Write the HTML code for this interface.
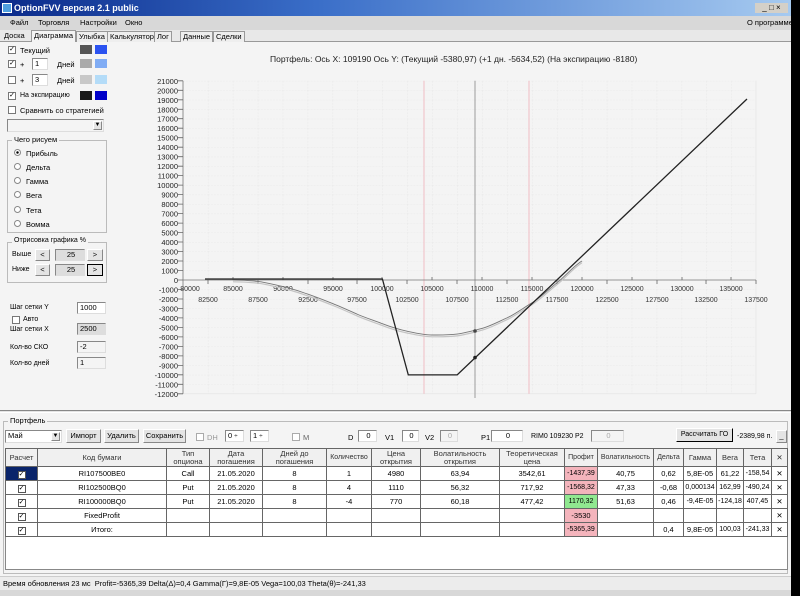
<!DOCTYPE html>
<html><head><meta charset="utf-8">
<style>
*{box-sizing:border-box;margin:0;padding:0}
body{width:800px;height:596px;background:#000;font-family:"Liberation Sans","DejaVu Sans",sans-serif;font-size:8px;color:#000;position:relative;overflow:hidden}
.a{position:absolute}
#win{left:0;top:0;width:791px;height:596px;background:#f4f4f4}
#title{left:0;top:0;width:791px;height:16px;background:linear-gradient(90deg,#0a2a8a,#3a6ec8 40%,#a6caf0);color:#fff;font-weight:bold;font-size:9px;line-height:16px;padding-left:14px}
#menu{left:0;top:16px;width:791px;height:14px;background:#d8d8d8;line-height:14px}
#tabs{left:0;top:30px;width:791px;height:12px;background:#e8e8e8;border-bottom:1px solid #999}
.tab{position:absolute;top:1px;height:11px;line-height:10px;border:1px solid #999;border-bottom:none;padding:0 2px;font-size:7.5px;background:#eee;white-space:nowrap}
.cb{position:absolute;width:8px;height:8px;border:1px solid #777;background:#fff;font-size:7px;line-height:6px;text-align:center}
.sw{position:absolute;width:12px;height:9px}
.inp{position:absolute;background:#fff;border:1px solid #888;border-right-color:#ddd;border-bottom-color:#ddd;font-size:7.5px;line-height:10px;padding-left:2px;white-space:nowrap}
.btn{position:absolute;background:#e4e4e4;border:1px solid #888;border-top-color:#fff;border-left-color:#fff;font-size:7.5px;text-align:center;white-space:nowrap;overflow:hidden}
.grp{position:absolute;border:1px solid #bbb}
.gl{position:absolute;background:#f4f4f4;padding:0 2px;font-size:7.5px;white-space:nowrap}
.rd{position:absolute;width:7px;height:7px;border-radius:50%;border:1px solid #888;background:#fff}
.t{position:absolute;font-size:7.5px;white-space:nowrap}
table{border-collapse:collapse;table-layout:fixed;position:absolute;left:5px;top:448px;background:#fff}
td{border:1px solid #666;font-size:7.5px;text-align:center;height:14px;padding:0;overflow:hidden;white-space:nowrap}
tr.h td{background:#f0f0f0;height:18px;line-height:8px;color:#333}
.ck{display:inline-block;width:8px;height:8px;border:1px solid #555;background:#fff;font-size:7px;line-height:6px}
.pk{background:#f4b4bc}.gr{background:#90e890}
</style></head><body>
<div id="win" class="a">
<div id="title" class="a">OptionFVV версия 2.1 public</div>
<div class="a" style="left:2px;top:3px;width:10px;height:10px;background:#4fa0e0;border:1px solid #fff"></div>
<div class="a" style="left:755px;top:3px;width:33px;height:10px;background:#d4d0c8;font-size:8px;line-height:9px;color:#000;text-align:center">_ □ ×</div>
<div id="menu" class="a"><span class="t" style="left:10px">Файл</span><span class="t" style="left:38px">Торговля</span><span class="t" style="left:80px">Настройки</span><span class="t" style="left:125px">Окно</span><span class="t" style="left:747px">О программе</span></div>
<div id="tabs" class="a">
<span class="tab" style="left:2px;border:none;background:none">Доска</span>
<span class="tab" style="left:31px;background:#f4f4f4;top:0;height:12px">Диаграмма</span>
<span class="tab" style="left:76px">Улыбка</span>
<span class="tab" style="left:107px">Калькулятор</span>
<span class="tab" style="left:154px">Лог</span>
<span class="tab" style="left:180px">Данные</span>
<span class="tab" style="left:213px">Сделки</span>
</div>

<div class="cb" style="left:8px;top:46px">✓</div><span class="t" style="left:20px;top:46px">Текущий</span>
<div class="sw" style="left:80px;top:45px;background:#555"></div><div class="sw" style="left:95px;top:45px;background:#2a52f0"></div>
<div class="cb" style="left:8px;top:60px">✓</div><span class="t" style="left:20px;top:60px">+</span>
<div class="inp" style="left:32px;top:58px;width:16px;height:12px">1</div><span class="t" style="left:57px;top:60px">Дней</span>
<div class="sw" style="left:80px;top:59px;background:#aaa"></div><div class="sw" style="left:95px;top:59px;background:#80acf4"></div>
<div class="cb" style="left:8px;top:76px"></div><span class="t" style="left:20px;top:76px">+</span>
<div class="inp" style="left:32px;top:74px;width:16px;height:12px">3</div><span class="t" style="left:57px;top:76px">Дней</span>
<div class="sw" style="left:80px;top:75px;background:#c8c8c8"></div><div class="sw" style="left:95px;top:75px;background:#b4dcf8"></div>
<div class="cb" style="left:8px;top:92px">✓</div><span class="t" style="left:20px;top:92px;font-size:7px">На экспирацию</span>
<div class="sw" style="left:80px;top:91px;background:#1a1a1a"></div><div class="sw" style="left:95px;top:91px;background:#0000c8"></div>
<div class="cb" style="left:8px;top:106px"></div><span class="t" style="left:20px;top:106px">Сравнить со стратегией</span>
<div class="inp" style="left:7px;top:119px;width:97px;height:13px;background:#f4f4f4"></div>
<div class="btn" style="left:93px;top:121px;width:9px;height:9px;font-size:6px;line-height:7px">▼</div>

<div class="grp" style="left:7px;top:140px;width:100px;height:93px"></div><span class="gl" style="left:12px;top:135px">Чего рисуем</span>
<div class="rd" style="left:14px;top:149px;background:radial-gradient(#000 30%,#fff 40%)"></div><span class="t" style="left:26px;top:149px">Прибыль</span>
<div class="rd" style="left:14px;top:163px"></div><span class="t" style="left:26px;top:163px">Дельта</span>
<div class="rd" style="left:14px;top:177px"></div><span class="t" style="left:26px;top:177px">Гамма</span>
<div class="rd" style="left:14px;top:191px"></div><span class="t" style="left:26px;top:191px">Вега</span>
<div class="rd" style="left:14px;top:206px"></div><span class="t" style="left:26px;top:206px">Тета</span>
<div class="rd" style="left:14px;top:220px"></div><span class="t" style="left:26px;top:220px">Вомма</span>

<div class="grp" style="left:7px;top:242px;width:100px;height:41px"></div><span class="gl" style="left:12px;top:237px;font-size:7px">Отрисовка графика %</span>
<span class="t" style="left:12px;top:251px;font-size:7px">Выше</span><div class="btn" style="left:35px;top:249px;width:15px;height:12px">&lt;</div>
<div class="inp" style="left:55px;top:249px;width:30px;height:12px;background:#ddd;text-align:center">25</div><div class="btn" style="left:87px;top:249px;width:16px;height:12px">&gt;</div>
<span class="t" style="left:12px;top:266px;font-size:7px">Ниже</span><div class="btn" style="left:35px;top:264px;width:15px;height:12px">&lt;</div>
<div class="inp" style="left:55px;top:264px;width:30px;height:12px;background:#ddd;text-align:center">25</div><div class="btn" style="left:87px;top:264px;width:16px;height:12px;border-color:#000">&gt;</div>

<span class="t" style="left:10px;top:304px;font-size:7px">Шаг сетки Y</span><div class="inp" style="left:77px;top:302px;width:29px;height:12px">1000</div>
<div class="cb" style="left:12px;top:316px"></div><span class="t" style="left:23px;top:316px;font-size:7px">Авто</span>
<span class="t" style="left:10px;top:326px;font-size:7px">Шаг сетки X</span><div class="inp" style="left:77px;top:323px;width:29px;height:12px;background:#ddd">2500</div>
<span class="t" style="left:10px;top:344px;font-size:7px">Кол-во СКО</span><div class="inp" style="left:77px;top:341px;width:29px;height:12px;background:#f4f4f4">-2</div>
<span class="t" style="left:10px;top:360px;font-size:7px">Кол-во дней</span><div class="inp" style="left:77px;top:357px;width:29px;height:12px;background:#f4f4f4">1</div>

<svg class="a" style="left:0;top:0" width="791" height="410" viewBox="0 0 791 410">
<defs><pattern id="g" x="183" y="80.8" width="24.93" height="9.485" patternUnits="userSpaceOnUse">
<line x1="0" y1="0" x2="24.93" y2="0" stroke="#e2e2e2" stroke-width="0.6" stroke-dasharray="2,1"/>
<line x1="0" y1="0" x2="0" y2="9.485" stroke="#e2e2e2" stroke-width="0.6" stroke-dasharray="2,1"/></pattern></defs>
<rect x="183" y="80.8" width="573" height="313" fill="url(#g)"/>
<line x1="756" y1="80.8" x2="756" y2="393.8" stroke="#e2e2e2" stroke-width="0.6"/>
<line x1="183" y1="393.8" x2="756" y2="393.8" stroke="#e2e2e2" stroke-width="0.6"/>
<text x="270" y="62" font-size="8.5" font-family="Liberation Sans" fill="#222">Портфель: Ось X: 109190 Ось Y: (Текущий -5380,97) (+1 дн. -5634,52) (На экспирацию -8180)</text>
<line x1="424" y1="80.8" x2="424" y2="393.8" stroke="#f0b0b8" stroke-width="0.8"/>
<line x1="529" y1="80.8" x2="529" y2="393.8" stroke="#f0b0b8" stroke-width="0.8"/>
<line x1="475" y1="80.8" x2="475" y2="398" stroke="#aaa" stroke-width="1.2"/>
<line x1="183" y1="80.8" x2="183" y2="393.8" stroke="#777" stroke-width="0.8"/>
<line x1="183" y1="280" x2="756" y2="280" stroke="#777" stroke-width="0.8"/>
<g stroke="#666" stroke-width="0.8">
<path d="M178 80.8h5M178 90.3h5M178 99.8h5M178 109.3h5M178 118.7h5M178 128.2h5M178 137.7h5M178 147.2h5M178 156.7h5M178 166.2h5M178 175.6h5M178 185.1h5M178 194.6h5M178 204.1h5M178 213.6h5M178 223.1h5M178 232.6h5M178 242h5M178 251.5h5M178 261h5M178 270.5h5M178 280h5M178 289.5h5M178 299h5M178 308.4h5M178 317.9h5M178 327.4h5M178 336.9h5M178 346.4h5M178 355.9h5M178 365.4h5M178 374.8h5M178 384.3h5M178 393.8h5"/>
<path d="M208 280v4M233 277v3M258 280v4M283 277v3M308 280v4M333 277v3M357 280v4M382 277v3M407 280v4M432 277v3M457 280v4M482 277v3M507 280v4M532 277v3M557 280v4M582 277v3M607 280v4M632 277v3M657 280v4M682 277v3M706 280v4M731 277v3M756 280v4"/>
</g>
<g font-size="7.5" font-family="Liberation Sans" fill="#222" text-anchor="end">
<text x="178" y="83.8">21000</text><text x="178" y="93.3">20000</text><text x="178" y="102.8">19000</text><text x="178" y="112.3">18000</text><text x="178" y="121.7">17000</text><text x="178" y="131.2">16000</text><text x="178" y="140.7">15000</text><text x="178" y="150.2">14000</text><text x="178" y="159.7">13000</text><text x="178" y="169.2">12000</text><text x="178" y="178.6">11000</text><text x="178" y="188.1">10000</text><text x="178" y="197.6">9000</text><text x="178" y="207.1">8000</text><text x="178" y="216.6">7000</text><text x="178" y="226.1">6000</text><text x="178" y="235.6">5000</text><text x="178" y="245">4000</text><text x="178" y="254.5">3000</text><text x="178" y="264">2000</text><text x="178" y="273.5">1000</text><text x="178" y="283">0</text><text x="178" y="292.5">-1000</text><text x="178" y="302">-2000</text><text x="178" y="311.4">-3000</text><text x="178" y="320.9">-4000</text><text x="178" y="330.4">-5000</text><text x="178" y="339.9">-6000</text><text x="178" y="349.4">-7000</text><text x="178" y="358.9">-8000</text><text x="178" y="368.4">-9000</text><text x="178" y="377.8">-10000</text><text x="178" y="387.3">-11000</text><text x="178" y="396.8">-12000</text>
</g>
<g font-size="7" font-family="Liberation Sans" fill="#333" text-anchor="middle">
<text x="190" y="291">80000</text><text x="233" y="291">85000</text><text x="283" y="291">90000</text><text x="333" y="291">95000</text><text x="382" y="291">100000</text><text x="432" y="291">105000</text><text x="482" y="291">110000</text><text x="532" y="291">115000</text><text x="582" y="291">120000</text><text x="632" y="291">125000</text><text x="682" y="291">130000</text><text x="731" y="291">135000</text>
<text x="208" y="302">82500</text><text x="258" y="302">87500</text><text x="308" y="302">92500</text><text x="357" y="302">97500</text><text x="407" y="302">102500</text><text x="457" y="302">107500</text><text x="507" y="302">112500</text><text x="557" y="302">117500</text><text x="607" y="302">122500</text><text x="657" y="302">127500</text><text x="706" y="302">132500</text><text x="756" y="302">137500</text>
</g>
<path d="M233 280 C245 280 250 280.5 258 281.4 S275 285 283 286.6 S300 291.5 308 294.2 S325 300.5 333 303.7 S350 311 357 314.1 S374 320.5 382 323.6 S399 329.5 407 331.2 S424 335 432 335 S449 335.2 457 334.1 S474 330.5 482 328.4 S499 321.5 507 317.9 S524 307.5 532 302.8 S549 289 557 282.8 S574 265.5 582 261" fill="none" stroke="#c4c4c4" stroke-width="1.2" transform="translate(0,1.8)"/>
<path d="M233 280 C245 280 250 280.5 258 281.4 S275 285 283 286.6 S300 291.5 308 294.2 S325 300.5 333 303.7 S350 311 357 314.1 S374 320.5 382 323.6 S399 329.5 407 331.2 S424 335 432 335 S449 335.2 457 334.1 S474 330.5 482 328.4 S499 321.5 507 317.9 S524 307.5 532 302.8 S549 289 557 282.8 S574 265.5 582 261" fill="none" stroke="#777" stroke-width="0.9"/>
<path d="M205 279 L382.4 279 L408.3 374.9 L457.2 374.9 L747 99" fill="none" stroke="#222" stroke-width="1.3"/>
<circle cx="475" cy="331" r="1.8" fill="#444"/><circle cx="475" cy="357.6" r="1.8" fill="#222"/>
</svg>

<div class="a" style="left:0;top:410px;width:791px;height:3px;border-top:1px solid #888;border-bottom:1px solid #fff;background:#e4e4e4"></div>
<div class="grp" style="left:3px;top:421px;width:785px;height:153px"></div><span class="gl" style="left:8px;top:416px">Портфель</span>
<div class="inp" style="left:5px;top:430px;width:57px;height:13px">Май</div><div class="btn" style="left:51px;top:432px;width:9px;height:9px;font-size:6px;line-height:7px">▼</div>
<div class="btn" style="left:66px;top:429px;width:35px;height:14px;line-height:12px">Импорт</div>
<div class="btn" style="left:104px;top:429px;width:35px;height:14px;line-height:12px">Удалить</div>
<div class="btn" style="left:143px;top:429px;width:43px;height:14px;line-height:12px">Сохранить</div>
<div class="cb" style="left:196px;top:433px;border-color:#aaa"></div><span class="t" style="left:207px;top:433px;color:#999">DH</span>
<div class="inp" style="left:225px;top:430px;width:19px;height:12px">0 <span style="font-size:6px">÷</span></div>
<div class="inp" style="left:250px;top:430px;width:19px;height:12px">1 <span style="font-size:6px">÷</span></div>
<div class="cb" style="left:292px;top:433px;border-color:#aaa"></div><span class="t" style="left:303px;top:433px;color:#666">M</span>
<span class="t" style="left:348px;top:433px">D</span><div class="inp" style="left:358px;top:430px;width:19px;height:12px;text-align:center">0</div>
<span class="t" style="left:385px;top:433px">V1</span><div class="inp" style="left:402px;top:430px;width:17px;height:12px;text-align:center">0</div>
<span class="t" style="left:425px;top:433px">V2</span><div class="inp" style="left:440px;top:430px;width:18px;height:12px;text-align:center;color:#aaa;background:#f4f4f4">0</div>
<span class="t" style="left:481px;top:433px">P1</span><div class="inp" style="left:491px;top:430px;width:32px;height:12px;text-align:center">0</div>
<span class="t" style="left:531px;top:433px;font-size:7px">RIM0 109230 P2</span><div class="inp" style="left:591px;top:430px;width:33px;height:12px;text-align:center;color:#aaa;background:#f4f4f4">0</div>
<div class="btn" style="left:676px;top:428px;width:57px;height:14px;line-height:12px;font-size:7px;border-color:#000;border-top-color:#fff;border-left-color:#fff">Рассчитать ГО</div>
<span class="t" style="left:737px;top:433px;font-size:7px">-2389,98 п.</span><div class="btn" style="left:776px;top:430px;width:11px;height:13px">_</div>

<div class="a" style="left:5px;top:448px;width:783px;height:122px;background:#fff;border:1px solid #888"></div>
<table>
<colgroup><col style="width:32px"><col style="width:129px"><col style="width:43px"><col style="width:53px"><col style="width:64px"><col style="width:45px"><col style="width:49px"><col style="width:79px"><col style="width:65px"><col style="width:33px"><col style="width:56px"><col style="width:30px"><col style="width:33px"><col style="width:27px"><col style="width:28px"><col style="width:16px"></colgroup>
<tr class="h"><td>Расчет</td><td>Код бумаги</td><td>Тип<br>опциона</td><td>Дата<br>погашения</td><td>Дней до<br>погашения</td><td style="font-size:7px">Количество</td><td>Цена<br>открытия</td><td>Волатильность<br>открытия</td><td>Теоретическая<br>цена</td><td style="font-size:7px">Профит</td><td style="font-size:7px">Волатильность</td><td style="font-size:7px">Дельта</td><td>Гамма</td><td>Вега</td><td>Тета</td><td>✕</td></tr>
<tr><td style="background:#0a246a"><span class="ck">✓</span></td><td>RI107500BE0</td><td>Call</td><td>21.05.2020</td><td>8</td><td>1</td><td>4980</td><td>63,94</td><td>3542,61</td><td class="pk" style="font-size:7px">-1437,39</td><td>40,75</td><td>0,62</td><td>5,8E-05</td><td>61,22</td><td style="font-size:7px">-158,54</td><td>✕</td></tr>
<tr><td><span class="ck">✓</span></td><td>RI102500BQ0</td><td>Put</td><td>21.05.2020</td><td>8</td><td>4</td><td>1110</td><td>56,32</td><td>717,92</td><td class="pk" style="font-size:7px">-1568,32</td><td>47,33</td><td>-0,68</td><td style="font-size:7px">0,000134</td><td style="font-size:7px">162,99</td><td style="font-size:7px">-490,24</td><td>✕</td></tr>
<tr><td><span class="ck">✓</span></td><td>RI100000BQ0</td><td>Put</td><td>21.05.2020</td><td>8</td><td>-4</td><td>770</td><td>60,18</td><td>477,42</td><td class="gr" style="font-size:7px">1170,32</td><td>51,63</td><td>0,46</td><td style="font-size:7px">-9,4E-05</td><td style="font-size:7px">-124,18</td><td style="font-size:7px">407,45</td><td>✕</td></tr>
<tr><td><span class="ck">✓</span></td><td>FixedProfit</td><td></td><td></td><td></td><td></td><td></td><td></td><td></td><td class="pk">-3530</td><td></td><td></td><td></td><td></td><td></td><td>✕</td></tr>
<tr><td><span class="ck">✓</span></td><td>Итого:</td><td></td><td></td><td></td><td></td><td></td><td></td><td></td><td class="pk" style="font-size:7px">-5365,39</td><td></td><td>0,4</td><td>9,8E-05</td><td style="font-size:7px">100,03</td><td style="font-size:7px">-241,33</td><td>✕</td></tr>
</table>
<div class="a" style="left:0;top:576px;width:791px;height:14px;background:#ececec;border-top:1px solid #ccc;font-size:7.5px;line-height:14px;padding-left:3px">Время обновления 23 мс&nbsp; Profit=-5365,39 Delta(Δ)=0,4 Gamma(Γ)=9,8E-05 Vega=100,03 Theta(θ)=-241,33</div>
<div class="a" style="left:0;top:590px;width:791px;height:6px;background:#d8d8d8"></div>
</div>
</body></html>
